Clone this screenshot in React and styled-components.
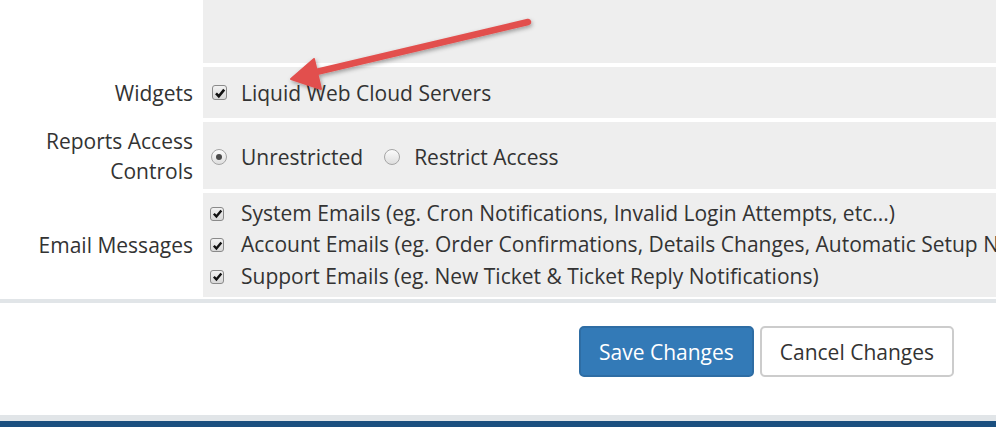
import styled, { createGlobalStyle } from "styled-components";

const GlobalStyle = createGlobalStyle`
    html, body {
        margin: 0;
        padding: 0;
        background: #fff;
        overflow: hidden;
    }
    body {
        font-family: "Open Sans", "Liberation Sans", sans-serif;
        color: #333;
    }
`;

const Page = styled.div`
    position: relative;
    width: 1532px;
    font-size: 21px;
`;

const FormTable = styled.div`
    display: grid;
    grid-template-columns: 203px 1fr;
    row-gap: 4px;
`;

const Label = styled.div`
    display: flex;
    align-items: center;
    justify-content: flex-end;
    text-align: right;
    padding-right: 10px;
    line-height: 30px;
`;

const Field = styled.div`
    background: #eeeeee;
    min-height: ${(p) => p.$height || 0}px;
    display: flex;
    flex-direction: ${(p) => (p.$stack ? "column" : "row")};
    justify-content: ${(p) => (p.$stack ? "center" : "flex-start")};
    align-items: ${(p) => (p.$stack ? "flex-start" : "center")};
    padding-left: ${(p) => p.$pad || 9}px;
    padding-top: ${(p) => p.$shift || 0}px;
    box-sizing: border-box;
    white-space: nowrap;
`;

const Option = styled.label`
    display: flex;
    align-items: center;
    line-height: ${(p) => p.$lh || 30}px;
    margin-right: ${(p) => p.$gap || 0}px;
`;

const Box = styled.span`
    width: ${(p) => p.$size || 15}px;
    height: ${(p) => p.$size || 15}px;
    box-sizing: border-box;
    border: 1px solid #8a8a8a;
    border-radius: 3px;
    background: linear-gradient(#f2f2f2, #d8d8d8);
    display: inline-flex;
    align-items: center;
    justify-content: center;
    margin-right: ${(p) => p.$space || 14}px;
    flex: none;
`;

const Radio = styled.span`
    width: 16px;
    height: 16px;
    box-sizing: border-box;
    border: 1px solid #a5a5a5;
    border-radius: 50%;
    background: linear-gradient(#fbfbfb, #dedede);
    display: inline-flex;
    align-items: center;
    justify-content: center;
    margin-right: 14px;
    flex: none;

    &::after {
        content: "";
        width: 6px;
        height: 6px;
        border-radius: 50%;
        background: ${(p) => (p.$checked ? "#4a4a4a" : "transparent")};
    }
`;

const Divider = styled.div`
    margin-top: 2px;
    height: 4px;
    background: #e1e5e8;
`;

const ButtonBar = styled.div`
    display: flex;
    justify-content: center;
    gap: 6px;
    padding: 23px 0 38px 1px;
`;

const Button = styled.button`
    font-family: inherit;
    font-size: 21px;
    height: 51px;
    padding: 0 18px;
    border-radius: 5px;
    border: 2px solid ${(p) => (p.$primary ? "#2e6da4" : "#cccccc")};
    background: ${(p) => (p.$primary ? "#337ab7" : "#fff")};
    color: ${(p) => (p.$primary ? "#fff" : "#333")};
    cursor: pointer;
`;

const FooterBand = styled.div`
    height: 6px;
    background: #e1e5e8;
`;

const FooterBar = styled.div`
    height: 6px;
    background: #1b4f7f;
`;

const ArrowOverlay = styled.svg`
    position: absolute;
    left: 0;
    top: 0;
    pointer-events: none;
`;

function Check({ size = 15, space }) {
    return (
        <Box $size={size} $space={space}>
            <svg width={size - 3} height={size - 3} viewBox="0 0 12 12">
                <path d="M2 6.3 L4.8 9.2 L10.2 2.6" fill="none" stroke="#111" strokeWidth="2.6" />
            </svg>
        </Box>
    );
}

const emails = [
    "System Emails (eg. Cron Notifications, Invalid Login Attempts, etc...)",
    "Account Emails (eg. Order Confirmations, Details Changes, Automatic Setup Notifications, etc...)",
    "Support Emails (eg. New Ticket & Ticket Reply Notifications)",
];

export default function App() {
    return (
        <Page>
            <GlobalStyle />
            <FormTable>
                <Label />
                <Field $height={63} />

                <Label>Widgets</Label>
                <Field $height={51}>
                    <Option>
                        <Check />
                        Liquid Web Cloud Servers
                    </Option>
                </Field>

                <Label>
                    Reports Access
                    <br />
                    Controls
                </Label>
                <Field $height={67} $pad={8} $shift={3}>
                    <Option $gap={21}>
                        <Radio $checked />
                        Unrestricted
                    </Option>
                    <Option>
                        <Radio />
                        Restrict Access
                    </Option>
                </Field>

                <Label>Email Messages</Label>
                <Field $height={104} $stack $pad={7}>
                    {emails.map((text) => (
                        <Option key={text} $lh={31.5}>
                            <Check size={14} space={17} />
                            {text}
                        </Option>
                    ))}
                </Field>
            </FormTable>
            <Divider />
            <ButtonBar>
                <Button $primary>Save Changes</Button>
                <Button>Cancel Changes</Button>
            </ButtonBar>
            <FooterBand />
            <FooterBar />

            <ArrowOverlay width="600" height="120">
                <defs>
                    <filter id="shadow" x="-20%" y="-50%" width="140%" height="200%">
                        <feDropShadow dx="1" dy="2" stdDeviation="2" floodColor="#000" floodOpacity="0.35" />
                    </filter>
                </defs>
                <g filter="url(#shadow)" fill="#e2504e" stroke="#e2504e" strokeLinejoin="round">
                    <line x1="528" y1="22" x2="312" y2="73" strokeWidth="6.5" strokeLinecap="round" />
                    <polygon points="291,79 314,59 321,89" strokeWidth="2" />
                </g>
            </ArrowOverlay>
        </Page>
    );
}
